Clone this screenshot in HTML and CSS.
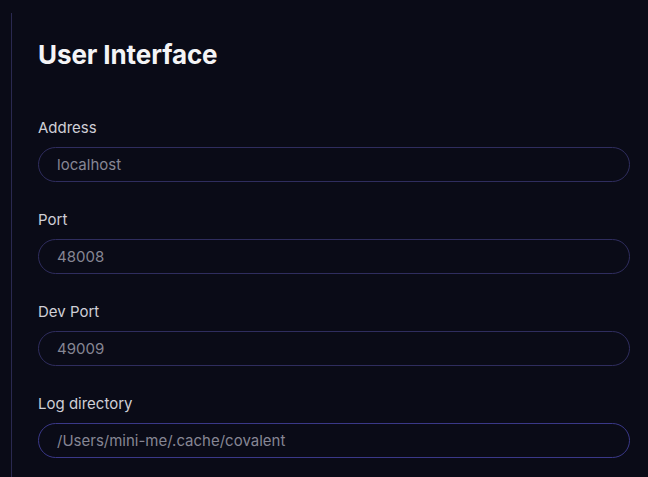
FILE: index.html
```html
<!DOCTYPE html>
<html lang="en">
<head>
<meta charset="utf-8">
<title>User Interface</title>
<link rel="stylesheet" href="styles.css">
</head>
<body>
<div class="panel">
  <h1 class="title">User Interface</h1>
  <div class="fields">
    <div class="field">
      <label class="label">Address</label>
      <div class="input">localhost</div>
    </div>
    <div class="field">
      <label class="label">Port</label>
      <div class="input">48008</div>
    </div>
    <div class="field">
      <label class="label">Dev Port</label>
      <div class="input">49009</div>
    </div>
    <div class="field">
      <label class="label">Log directory</label>
      <div class="input input-focus">/Users/mini-me/.cache/covalent</div>
    </div>
  </div>
</div>
</body>
</html>
```
FILE: styles.css
```css
html, body {
  margin: 0;
  padding: 0;
  background: #0a0b17;
}
body {
  font-family: Inter, "Noto Sans", sans-serif;
}
.panel {
  margin: 13px 0 0 11px;
  border-left: 1px solid #2a2950;
  padding: 26px 18px 20px 26px;
  min-height: calc(100vh - 13px);
  box-sizing: border-box;
}
.title {
  margin: 0;
  font-size: 26px;
  line-height: 32px;
  font-weight: 700;
  color: #f4f4f6;
  letter-spacing: -0.1px;
}
.fields {
  display: flex;
  flex-direction: column;
  gap: 28px;
  margin-top: 47px;
}
.field {
  display: flex;
  flex-direction: column;
  gap: 9px;
}
.label {
  font-size: 15px;
  line-height: 20px;
  color: #cfcfd6;
}
.input {
  height: 35px;
  box-sizing: border-box;
  border: 1px solid #2f2d5e;
  border-radius: 18px;
  padding: 0 18px;
  display: flex;
  align-items: center;
  font-size: 15px;
  color: #868694;
}
.input-focus {
  border-color: #3a3888;
}
```
